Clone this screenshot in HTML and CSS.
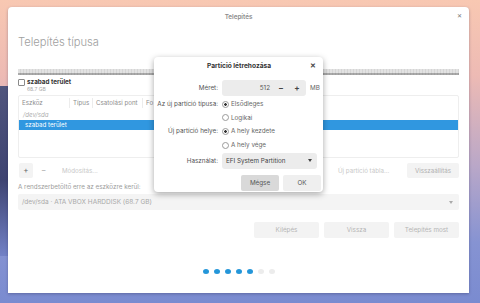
FILE: index.html
```html
<!DOCTYPE html>
<html lang="hu">
  <head>
    <meta charset="utf-8">
    <link rel="stylesheet" href="styles.css">
  </head>
  <body>
    <div class="desktop">
      <div class="hill"></div>
      <div class="window">
        <div class="titlebar">
          <span class="title">Telepítés</span>
          <span class="close">✕</span>
        </div>
        <div class="content">
          <div class="heading">Telepítés típusa</div>
          <div class="disk-bar"></div>
          <div class="legend">
            <span class="check"></span>
            <div>
              <div class="legend-name">szabad terület</div>
              <div class="legend-size">68.7 GB</div>
            </div>
          </div>
          <div class="table">
            <div class="thead">
              <span class="col c1">Eszköz</span>
              <span class="col c2">Típus</span>
              <span class="col c3">Csatolási pont</span>
              <span class="col c4">Fo</span>
            </div>
            <div class="row dev">/dev/sda</div>
            <div class="row selected">szabad terület</div>
          </div>
          <div class="toolbar">
            <span class="tool-btn plus">+</span>
            <span class="tool-btn flat minus">−</span>
            <span class="tool-btn flat wide">Módosítás...</span>
            <span class="spacer"></span>
            <span class="tool-btn flat table-btn">Új partíció tábla...</span>
            <span class="tool-btn reset">Visszaállítás</span>
          </div>
          <div class="boot-label">A rendszerbetöltő erre az eszközre kerül:</div>
          <div class="combo">
            <span>/dev/sda · ATA VBOX HARDDISK (68.7 GB)</span>
            <span class="arrow"></span>
          </div>
          <div class="actions">
            <span class="btn">Kilépés</span>
            <span class="btn">Vissza</span>
            <span class="btn">Telepítés most</span>
          </div>
          <div class="dots">
            <span class="dot on"></span>
            <span class="dot on"></span>
            <span class="dot on"></span>
            <span class="dot on"></span>
            <span class="dot on"></span>
            <span class="dot"></span>
            <span class="dot"></span>
          </div>
        </div>

        <div class="dialog">
          <div class="dialog-title">
            <span>Partíció létrehozása</span>
            <span class="dialog-close">✕</span>
          </div>
          <div class="form">
            <span class="label">Méret:</span>
            <div class="size-row">
              <div class="spin">
                <span class="spin-value">512</span>
                <span class="spin-btn">−</span>
                <span class="spin-btn">+</span>
              </div>
              <span class="unit">MB</span>
            </div>

            <span class="label">Az új partíció típusa:</span>
            <span class="radio checked">Elsődleges</span>
            <span></span>
            <span class="radio">Logikai</span>

            <span class="label">Új partíció helye:</span>
            <span class="radio checked">A hely kezdete</span>
            <span></span>
            <span class="radio">A hely vége</span>

            <span class="label">Használat:</span>
            <div class="select">
              <span>EFI System Partition</span>
              <span class="arrow dark"></span>
            </div>
          </div>
          <div class="dialog-buttons">
            <span class="dbtn pressed">Mégse</span>
            <span class="dbtn">OK</span>
          </div>
        </div>
      </div>
    </div>
  </body>
</html>
```

FILE: styles.css
```css
body {margin: 0; font-family: Inter, "Noto Sans", sans-serif}

.desktop {
  position: relative;
  width: 480px;
  height: 303px;
  padding: 7px 11px 10px 8px;
  box-sizing: border-box;
  background: linear-gradient(180deg, #f8c8b2 0%, #edbab4 25%, #b9a7c8 55%, #8693d2 80%, #7a8bd0 100%);
  overflow: hidden
}
.hill {position: absolute; left: 0; top: 86px; width: 10px; height: 170px; background: linear-gradient(180deg, #50557d, #3e4371 55%, #7281c6)}

.window {
  position: relative;
  height: 100%;
  background: #fff;
  border-radius: 4px 4px 0 0;
  box-shadow: 0 1px 3px rgba(40, 40, 80, .35);
  display: flex;
  flex-direction: column
}

.titlebar {height: 19px; display: flex; align-items: center; justify-content: center; position: relative}
.title {font-size: 6.3px; font-weight: 600; color: #8c8c8c}
.close {position: absolute; right: 7px; top: 5px; font-size: 6px; color: #777}

.content {padding: 0 10px 19px; display: flex; flex-direction: column; flex: 1}
.heading {font-size: 11.2px; font-weight: 300; color: #a0a0a0; margin-top: 8px; height: 16px; line-height: 16px}

.disk-bar {
  margin-top: 19px;
  height: 6px;
  background:
    repeating-linear-gradient(90deg, transparent 0 2px, rgba(0,0,0,.06) 2px 3px),
    linear-gradient(180deg, #e2e2e2 0 60%, #a9a9a9 60% 100%)
}

.legend {display: flex; gap: 2px; margin-top: 3px; height: 16px}
.check {width: 5px; height: 5px; border: 1px solid #8a8a8a; border-radius: 1px; margin-top: 1px}
.legend-name {font-size: 6.3px; font-weight: 700; color: #333; line-height: 8px}
.legend-size {font-size: 5px; color: #aaa; line-height: 6px}

.table {margin-top: 1px; height: 63px; border: 1px solid #eee; border-radius: 2px; box-sizing: border-box}
.thead {display: flex; height: 14px; align-items: center; font-size: 6.2px; color: #8e8e8e}
.col {padding-left: 3px; border-right: 1px solid #ececec; line-height: 10px; box-sizing: border-box}
.c1 {width: 51px}
.c2 {width: 23px}
.c3 {width: 50px}
.c4 {flex: 1; border: 0}
.row {height: 10px; line-height: 10px; font-size: 6.2px; padding-left: 4px}
.dev {color: #b0b0b0; font-style: italic}
.selected {background: #3097e0; color: #fff; padding-left: 6px}

.toolbar {display: flex; align-items: center; gap: 4px; margin-top: 5px; height: 15px}
.tool-btn {height: 15px; line-height: 15px; font-size: 6.2px; color: #c8c8c8; background: #f3f3f3; border-radius: 2px; padding: 0 4px}
.plus {color: #666; font-size: 8px; width: 6px; text-align: center; margin-left: 1px}
.minus {color: #aaa; font-size: 8px; width: 6px}
.flat {background: transparent}
.wide {width: 40px; margin-left: 3px}
.spacer {flex: 1}
.table-btn {width: 61px}
.reset {width: 44px; text-align: center; color: #b0b0b0}

.boot-label {font-size: 6.3px; color: #9c9c9c; margin-top: 5px; line-height: 8px}
.combo {display: flex; align-items: center; justify-content: space-between; margin-top: 3px; height: 16px; padding: 0 6px 0 4px; background: #f4f4f4; border-radius: 2px; font-size: 6.5px; color: #a9a9a9}
.arrow {width: 0; height: 0; border-left: 2.5px solid transparent; border-right: 2.5px solid transparent; border-top: 3px solid #aaa}
.arrow.dark {border-top-color: #444}

.actions {display: flex; justify-content: flex-end; gap: 5px; margin-top: 12px}
.btn {width: 65px; height: 16px; line-height: 16px; text-align: center; font-size: 6.3px; color: #b5b5b5; background: #f3f3f3; border-radius: 2px}

.dots {display: flex; justify-content: center; gap: 5px; margin-top: auto}
.dot {width: 6px; height: 5px; border-radius: 50%; background: #ececec}
.dot.on {background: #2496d9}

/* overlay dialog */
.dialog {
  position: absolute;
  left: 146px;
  top: 50px;
  width: 169px;
  height: 135px;
  background: #fff;
  border-radius: 4px;
  box-shadow: 0 2px 6px rgba(0,0,0,.35);
  padding: 0 2px 1px 3px;
  box-sizing: border-box;
  display: flex;
  flex-direction: column;
  font-size: 6.3px;
  color: #555
}
.dialog-title {position: relative; height: 19px; line-height: 19px; text-align: center; font-size: 6.6px; font-weight: 700; color: #333}
.dialog-close {position: absolute; right: 5px; top: 0; color: #444; font-weight: 700}

.form {display: grid; grid-template-columns: 61px 1fr; grid-template-rows: 18px 14px 13.5px 13.5px 14px 17px; column-gap: 4px; margin-top: 3px}
.label {text-align: right; align-self: center; color: #555; white-space: nowrap}
.size-row {display: flex; align-items: center; gap: 4px}
.spin {width: 84px; height: 16px; background: #ececec; border-radius: 3px; display: flex; align-items: center}
.spin-value {width: 48px; padding-right: 3px; text-align: right; color: #555}
.spin-btn {width: 16px; text-align: center; font-weight: 700; font-size: 8px; color: #444}
.unit {color: #666}

.radio {display: flex; align-items: center; gap: 2px; color: #666}
.radio::before {content: ""; width: 5px; height: 5px; border: 1px solid #9a9a9a; border-radius: 50%; box-sizing: content-box}
.radio.checked::before {background: radial-gradient(circle, #333 0 1.2px, #fff 1.5px)}

.select {display: flex; align-items: center; justify-content: space-between; align-self: center; width: 95px; height: 16px; box-sizing: border-box; padding: 0 5px 0 4px; background: #ececec; border-radius: 3px; color: #444}

.dialog-buttons {display: flex; justify-content: flex-end; gap: 4px; margin-top: auto}
.dbtn {width: 38px; height: 16px; line-height: 16px; text-align: center; background: #efefef; border-radius: 2px; color: #555}
.dbtn.pressed {background: #d9d9d9}
```
